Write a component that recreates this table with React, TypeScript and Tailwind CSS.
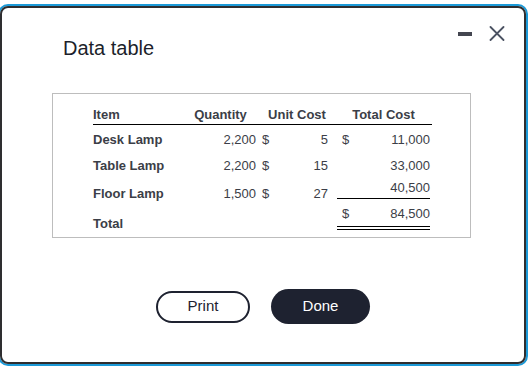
import React from 'react';

const rows = [
  { item: 'Desk Lamp', qty: '2,200', unit: '5', total: '11,000', dollar: true, h: 'h-[28px]' },
  { item: 'Table Lamp', qty: '2,200', unit: '15', total: '33,000', dollar: false, h: 'h-[25px]' },
];

const Minus = () => <div className="mt-[6px] h-[4px] w-[14px] bg-[#444650]" />;

const Close = () => (
  <svg width="16" height="15" viewBox="0 0 16 15" className="text-[#4b5262]">
    <path d="M1.5 1 L14.5 14 M14.5 1 L1.5 14" stroke="currentColor" strokeWidth="1.8" strokeLinecap="round" />
  </svg>
);

export default function App() {
  return (
    <div className="w-[529px] h-[368px] overflow-hidden bg-white" style={{ fontFamily: '"Liberation Sans", Arial, sans-serif' }}>
      <div className="-ml-[2px] mt-[4px] w-[530px] h-[362px] rounded-[10px] border-2 border-[#1b9ad8]">
        <div className="h-full rounded-[8px] border-2 border-[#2e2e30] bg-white flex flex-col">
          {/* header */}
          <div className="flex items-start justify-between pl-[61px] pr-[19px]">
            <h1 className="mt-[28px] text-[20px] leading-[24px] text-[#1c1f2b]">Data table</h1>
            <div className="mt-[18px] flex items-start gap-[17px]">
              <Minus />
              <Close />
            </div>
          </div>

          {/* table */}
          <div className="ml-[50px] mt-[33px] w-[419px] h-[145px] border border-[#bdbdbd] pt-[10px] pl-[40px] text-[13px] leading-[15px] text-[#3b3e47]">
            <div className="flex h-[20px] items-center font-bold w-[339px]">
              <div className="w-[97px]">Item</div>
              <div className="w-[67px] text-center pr-[6px]">Quantity</div>
              <div className="w-[80px] text-center">Unit Cost</div>
              <div className="w-[95px] text-center pr-[2px]">Total Cost</div>
            </div>
            <div className="h-px w-[339px] bg-black" />

            {rows.map((r) => (
              <div key={r.item} className={`flex items-center ${r.h}`}>
                <div className="w-[97px] font-bold">{r.item}</div>
                <div className="w-[67px] text-right pr-[1px]">{r.qty}</div>
                <div className="w-[15px] pl-[5px]">$</div>
                <div className="w-[65px] text-right pr-[9px]">{r.unit}</div>
                <div className="w-[93px] flex justify-between pl-[5px]">
                  <span>{r.dollar ? '$' : ''}</span>
                  <span>{r.total}</span>
                </div>
              </div>
            ))}

            <div className="flex h-[28px]">
              <div className="w-[97px] font-bold self-center pt-[2px]">Floor Lamp</div>
              <div className="w-[67px] text-right pr-[1px] self-center pt-[2px]">1,500</div>
              <div className="w-[15px] pl-[5px] self-center pt-[2px]">$</div>
              <div className="w-[65px] text-right pr-[9px] self-center pt-[2px]">27</div>
              <div className="w-[93px] h-[21px] border-b border-black pt-[2px] text-right">40,500</div>
            </div>

            <div className="flex h-[31px]">
              <div className="w-[97px] font-bold self-center pt-[3px]">Total</div>
              <div className="w-[147px]" />
              <div className="w-[93px] h-[24px] border-b-4 border-double border-black flex justify-between pl-[5px]">
                <span>$</span>
                <span>84,500</span>
              </div>
            </div>
          </div>

          {/* buttons */}
          <div className="mt-[51px] flex items-center justify-center gap-[21px]">
            <button className="h-[32px] w-[94px] rounded-full border-2 border-[#1e2230] text-[15px] text-[#1e2230]">Print</button>
            <button className="h-[35px] w-[99px] rounded-full bg-[#1e2230] text-[15px] font-medium text-white">Done</button>
          </div>
        </div>
      </div>
    </div>
  );
}
